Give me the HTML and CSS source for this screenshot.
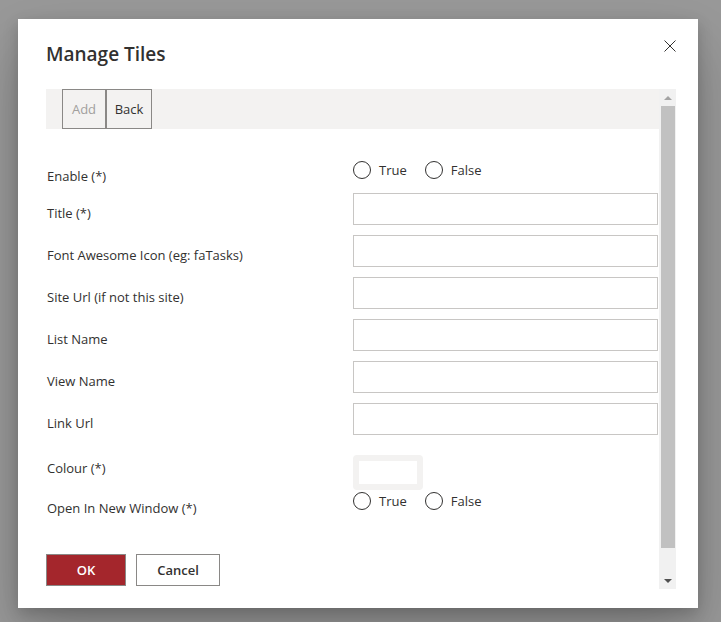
FILE: index.html
```html
<!DOCTYPE html>
<html lang="en">
<head>
<meta charset="utf-8">
<title>Manage Tiles</title>
<link rel="stylesheet" href="styles.css">
</head>
<body>
<div class="dialog">
  <div class="dialog-header">
    <h1 class="dialog-title">Manage Tiles</h1>
    <button class="close-btn" aria-label="Close">
      <svg width="12" height="12" viewBox="0 0 12 12"><path d="M0.5 0.5 L11.5 11.5 M11.5 0.5 L0.5 11.5" stroke="#323130" stroke-width="1" fill="none"/></svg>
    </button>
  </div>
  <div class="scroll-area">
    <div class="scroll-content">
      <div class="command-bar">
        <button class="cmd-btn cmd-add" disabled>Add</button>
        <button class="cmd-btn cmd-back">Back</button>
      </div>
      <div class="form">
        <div class="row row-enable">
          <label class="lbl lbl-enable">Enable (*)</label>
          <div class="radio-group">
            <span class="radio"><span class="circle"></span><span class="radio-text">True</span></span>
            <span class="radio"><span class="circle"></span><span class="radio-text">False</span></span>
          </div>
        </div>
        <div class="row">
          <label class="lbl lbl-field">Title (*)</label>
          <div class="text-input"></div>
        </div>
        <div class="row">
          <label class="lbl lbl-field">Font Awesome Icon (eg: faTasks)</label>
          <div class="text-input"></div>
        </div>
        <div class="row">
          <label class="lbl lbl-field">Site Url (if not this site)</label>
          <div class="text-input"></div>
        </div>
        <div class="row">
          <label class="lbl lbl-field">List Name</label>
          <div class="text-input"></div>
        </div>
        <div class="row">
          <label class="lbl lbl-field">View Name</label>
          <div class="text-input"></div>
        </div>
        <div class="row row-last-field">
          <label class="lbl lbl-field">Link Url</label>
          <div class="text-input"></div>
        </div>
        <div class="row row-colour">
          <label class="lbl lbl-colour">Colour (*)</label>
          <div class="swatch"></div>
        </div>
        <div class="row row-open">
          <label class="lbl lbl-open">Open In New Window (*)</label>
          <div class="radio-group">
            <span class="radio"><span class="circle"></span><span class="radio-text">True</span></span>
            <span class="radio"><span class="circle"></span><span class="radio-text">False</span></span>
          </div>
        </div>
        <div class="actions">
          <button class="btn btn-primary">OK</button>
          <button class="btn btn-default">Cancel</button>
        </div>
      </div>
    </div>
    <div class="scrollbar">
      <div class="sb-btn"><span class="arrow-up"></span></div>
      <div class="sb-track"><div class="sb-thumb"></div></div>
      <div class="sb-btn"><span class="arrow-down"></span></div>
    </div>
  </div>
</div>
</body>
</html>
```
FILE: styles.css
```css
* { box-sizing: border-box; }

html, body {
  margin: 0;
  height: 100%;
}

body {
  background: #999999;
  padding: 19px 0 0 18px;
  font-family: "Open Sans", "Noto Sans", sans-serif;
  color: #323130;
  overflow: hidden;
}

.dialog {
  width: 680px;
  height: 589px;
  background: #ffffff;
  box-shadow: 0 4.8px 14.4px rgba(0,0,0,0.18), 0 25.6px 57.6px rgba(0,0,0,0.22);
  display: flex;
  flex-direction: column;
  padding: 21px 22px 19px 28px;
}

.dialog-header {
  display: flex;
  justify-content: space-between;
  align-items: flex-start;
  height: 28px;
  margin-bottom: 21px;
}

.dialog-title {
  margin: 0;
  font-size: 19px;
  line-height: 28px;
  font-weight: 600;
  color: #323130;
}

.close-btn {
  border: 0;
  background: transparent;
  padding: 0;
  width: 12px;
  height: 12px;
  display: flex;
}

.scroll-area {
  flex: 1;
  display: flex;
  overflow: hidden;
}

.scroll-content {
  width: 613px;
  overflow: hidden;
}

.command-bar {
  height: 40px;
  background: #f3f2f1;
  padding-left: 16px;
  display: flex;
}

.cmd-btn {
  height: 40px;
  border: 1px solid #8a8886;
  background: #f3f2f1;
  font-family: inherit;
  font-size: 13px;
  color: #323130;
  padding: 0;
}

.cmd-add { width: 44px; color: #a19f9d; }
.cmd-back { width: 46px; }

.form {
  padding-top: 31px;
}

.row {
  display: grid;
  grid-template-columns: 307px 305px;
  align-items: start;
  margin-bottom: 10px;
}

.lbl {
  font-size: 13px;
  line-height: 20px;
  color: #323130;
  padding-left: 1px;
}

.row-enable { margin-bottom: 7px; }
.lbl-enable { padding-top: 6px; }
.lbl-field { padding-top: 10px; }
.row-last-field { margin-bottom: 20px; }
.row-colour { margin-bottom: 1px; }
.lbl-colour { padding-top: 3px; }
.row-open { margin-bottom: 36px; }
.lbl-open { padding-top: 7px; }

.radio-group {
  display: flex;
  gap: 18px;
}

.radio {
  display: flex;
  align-items: center;
  height: 20px;
}

.circle {
  width: 18px;
  height: 18px;
  border: 1px solid #323130;
  border-radius: 50%;
  margin-right: 8px;
}

.radio-text {
  font-size: 13px;
  line-height: 20px;
}

.text-input {
  height: 32px;
  border: 1px solid #c8c6c4;
  background: #fff;
}

.swatch {
  width: 70px;
  height: 35px;
  border: 6px solid #f3f2f1;
  border-radius: 4px;
  background: #fff;
}

.actions {
  display: flex;
  gap: 10px;
}

.btn {
  height: 32px;
  min-width: 80px;
  padding: 0 16px;
  font-family: inherit;
  font-size: 13px;
  font-weight: 600;
  border: 1px solid #8a8886;
}

.btn-primary {
  background: #a4262c;
  color: #ffffff;
}

.btn-default {
  background: #ffffff;
  color: #323130;
  width: 84px;
}

.scrollbar {
  width: 17px;
  background: #f1f1f1;
  display: flex;
  flex-direction: column;
}

.sb-btn {
  height: 17px;
  display: flex;
  align-items: center;
  justify-content: center;
}

.arrow-up {
  width: 0;
  height: 0;
  border-left: 4px solid transparent;
  border-right: 4px solid transparent;
  border-bottom: 4px solid #a3a3a3;
}

.arrow-down {
  width: 0;
  height: 0;
  border-left: 4px solid transparent;
  border-right: 4px solid transparent;
  border-top: 4px solid #505050;
}

.sb-track {
  flex: 1;
  padding: 0 1px 0 2px;
}

.sb-thumb {
  height: 442px;
  background: #c1c1c1;
}
```
